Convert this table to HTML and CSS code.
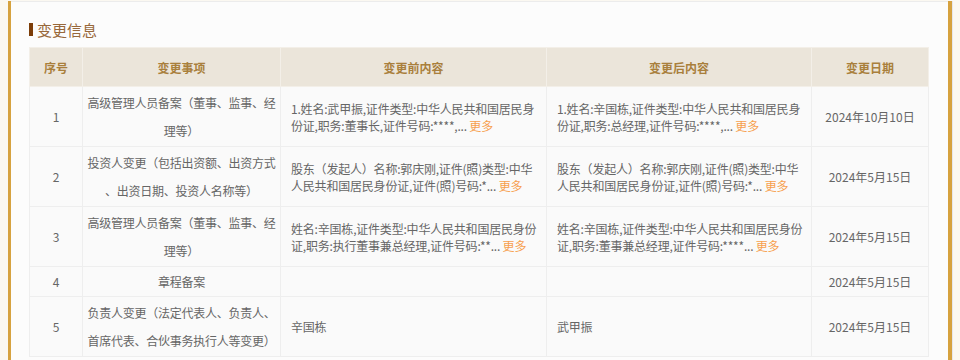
FILE: index.html
```html
<!DOCTYPE html>
<html lang="zh-CN">
<head>
<meta charset="utf-8">
<title>变更信息</title>
<link rel="stylesheet" href="styles.css">
</head>
<body>
<div class="frame">
  <div class="panel">
    <div class="section">
      <h2 class="title"><span class="mark"></span>变更信息</h2>
      <table class="changes">
        <colgroup>
          <col class="c-no"><col class="c-item"><col class="c-before"><col class="c-after"><col class="c-date">
        </colgroup>
        <thead>
          <tr><th>序号</th><th>变更事项</th><th>变更前内容</th><th>变更后内容</th><th>变更日期</th></tr>
        </thead>
        <tbody>
          <tr class="tall">
            <td class="no">1</td>
            <td class="item">高级管理人员备案（董事、监事、经理等）</td>
            <td class="txt">1.姓名:武甲振,证件类型:中华人民共和国居民身份证,职务:董事长,证件号码:****,... <a class="more">更多</a></td>
            <td class="txt">1.姓名:辛国栋,证件类型:中华人民共和国居民身份证,职务:总经理,证件号码:****,... <a class="more">更多</a></td>
            <td class="date">2024年10月10日</td>
          </tr>
          <tr class="tall">
            <td class="no">2</td>
            <td class="item">投资人变更（包括出资额、出资方式、出资日期、投资人名称等）</td>
            <td class="txt">股东（发起人）名称:郭庆刚,证件(照)类型:中华人民共和国居民身份证,证件(照)号码:*... <a class="more">更多</a></td>
            <td class="txt">股东（发起人）名称:郭庆刚,证件(照)类型:中华人民共和国居民身份证,证件(照)号码:*... <a class="more">更多</a></td>
            <td class="date">2024年5月15日</td>
          </tr>
          <tr class="tall">
            <td class="no">3</td>
            <td class="item">高级管理人员备案（董事、监事、经理等）</td>
            <td class="txt">姓名:辛国栋,证件类型:中华人民共和国居民身份证,职务:执行董事兼总经理,证件号码:**... <a class="more">更多</a></td>
            <td class="txt">姓名:辛国栋,证件类型:中华人民共和国居民身份证,职务:董事兼总经理,证件号码:****... <a class="more">更多</a></td>
            <td class="date">2024年5月15日</td>
          </tr>
          <tr class="short">
            <td class="no">4</td>
            <td class="item">章程备案</td>
            <td class="txt"></td>
            <td class="txt"></td>
            <td class="date">2024年5月15日</td>
          </tr>
          <tr class="tall">
            <td class="no">5</td>
            <td class="item">负责人变更（法定代表人、负责人、首席代表、合伙事务执行人等变更）</td>
            <td class="txt">辛国栋</td>
            <td class="txt">武甲振</td>
            <td class="date">2024年5月15日</td>
          </tr>
        </tbody>
      </table>
    </div>
  </div>
</div>
</body>
</html>
```
FILE: styles.css
```css
html, body {
  margin: 0;
  padding: 0;
}
body {
  background: #fbf8f1;
  font-family: "Noto Sans CJK SC", sans-serif;
  font-size: 12px;
  color: #666;
  height: 360px;
  overflow: hidden;
}
.frame {
  margin: 0 8px;
  height: 360px;
  box-shadow: 1px 0 0 #e6e6ec;
}
.panel {
  height: 360px;
  background: #fcfcfc;
  border-left: 3px solid #d6a23f;
  border-right: 4px solid #d6a23f;
  box-sizing: border-box;
}
.section {
  margin-top: 1px;
  border-top: 1px solid #ececec;
  padding: 0 17px 0 18px;
}
.title {
  margin: 17px 0 8px;
  display: flex;
  align-items: center;
  gap: 4px;
  height: 20px;
  font-size: 15px;
  font-weight: normal;
  color: #98683a;
}
.mark {
  display: block;
  width: 4px;
  height: 13px;
  background: #7c3d08;
}
.changes {
  width: 899px;
  border-collapse: collapse;
  table-layout: fixed;
  background: #fafafa;
}
.c-no { width: 53px; }
.c-item { width: 198px; }
.c-before { width: 266px; }
.c-after { width: 265px; }
.c-date { width: 117px; }
.changes th {
  height: 38px;
  background: #ebe5da;
  color: #a97f3c;
  font-weight: bold;
  font-size: 12px;
  border: 1px solid #f3efe8;
  padding: 0;
  text-align: center;
}
.changes td {
  border: 1px solid #eeeeee;
  padding: 0;
  vertical-align: middle;
}
.changes tr.tall td { height: 59px; }
.changes tr.short td { height: 29px; }
.no, .date {
  text-align: center;
  color: #666;
}
.changes td.item {
  text-align: center;
  line-height: 28px;
  padding: 0;
  letter-spacing: -0.25px;
  line-break: anywhere;
}
.changes td.txt {
  padding: 0 6px 0 10px;
  line-height: 17px;
  letter-spacing: -0.2px;
  word-break: break-all;
}
.more {
  color: #f7a04e;
  text-decoration: none;
  white-space: nowrap;
  cursor: pointer;
}
```
